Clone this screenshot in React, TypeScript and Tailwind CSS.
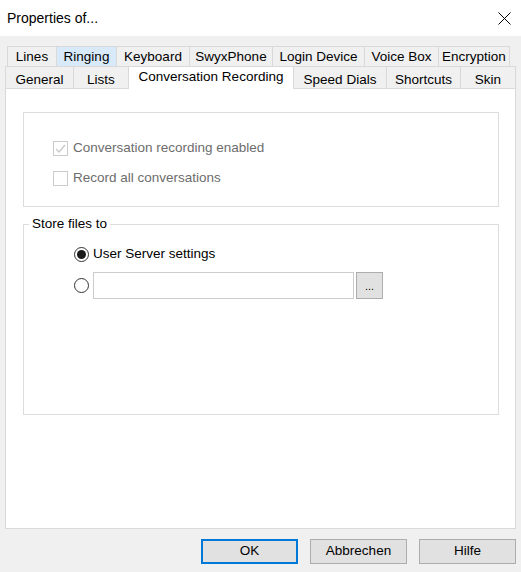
import { useState } from 'react'

const topTabs = [
  { label: 'Lines', w: 'w-[49px]', hover: false },
  { label: 'Ringing', w: 'w-[60px]', hover: true },
  { label: 'Keyboard', w: 'w-[73px]', hover: false },
  { label: 'SwyxPhone', w: 'w-[83px]', hover: false },
  { label: 'Login Device', w: 'w-[92px]', hover: false },
  { label: 'Voice Box', w: 'w-[74px]', hover: false },
  { label: 'Encryption', w: 'w-[72px]', hover: false },
]

const bottomTabs = [
  { label: 'General', w: 'w-[68px]' },
  { label: 'Lists', w: 'w-[55px]' },
  { label: 'Conversation Recording', w: 'w-[166px]' },
  { label: 'Speed Dials', w: 'w-[92px]' },
  { label: 'Shortcuts', w: 'w-[74px]' },
  { label: 'Skin', w: 'w-[56px]' },
]

function Radio({ checked }: { checked: boolean }) {
  return (
    <span className="w-[15px] h-[15px] rounded-full border border-[#333333] bg-white flex items-center justify-center shrink-0">
      {checked && <span className="w-[9px] h-[9px] rounded-full bg-[#1a1a1a]" />}
    </span>
  )
}

function CheckBox({ checked }: { checked: boolean }) {
  return (
    <span className="w-[15px] h-[15px] border border-[#cccccc] bg-white flex items-center justify-center shrink-0">
      {checked && (
        <svg width="13" height="13" viewBox="0 0 13 13">
          <path d="M2 7 L5 10 L11 3" fill="none" stroke="#c6c6c6" strokeWidth="1.2" />
        </svg>
      )}
    </span>
  )
}

export default function App() {
  const [active] = useState('Conversation Recording')
  const [path, setPath] = useState('')

  return (
    <div className="w-[521px] h-[572px] bg-[#f0f0f0] flex flex-col font-['Liberation_Sans',Arial,sans-serif] text-[13.5px] text-black overflow-hidden">
      {/* Title bar */}
      <div className="h-[36px] bg-white flex items-center justify-between pl-[7px] pr-[10px] shrink-0">
        <span className="text-[14px]">Properties of...</span>
        <svg width="13" height="13" viewBox="0 0 13 13">
          <path d="M0.5 0.5 L12.5 12.5 M12.5 0.5 L0.5 12.5" stroke="#000" strokeWidth="1" />
        </svg>
      </div>

      <div className="pl-[5px] pt-[10px]">
        {/* Tabs row 1 */}
        <div className="flex ml-[2px] h-[20px]">
          {topTabs.map((t, i) => (
            <div
              key={t.label}
              className={`${t.w} h-[20px] border-t border-l border-[#d9d9d9] text-center leading-[20px] ${
                t.hover ? 'bg-[#d8eaf9]' : 'bg-[#f0f0f0]'
              } ${i === topTabs.length - 1 ? 'border-r' : ''}`}
            >
              {t.label}
            </div>
          ))}
        </div>

        {/* Tabs row 2 */}
        <div className="flex h-[22px]">
          {bottomTabs.map((t, i) => {
            const isActive = t.label === active
            const afterActive = i > 0 && bottomTabs[i - 1].label === active
            if (isActive) {
              return (
                <div
                  key={t.label}
                  className={`${t.w} h-[23px] relative z-10 bg-white border-t border-l border-r border-[#d9d9d9] text-center leading-[19px]`}
                >
                  {t.label}
                </div>
              )
            }
            return (
              <div
                key={t.label}
                className={`${t.w} h-[22px] bg-[#f0f0f0] border-t border-[#d9d9d9] text-center leading-[25px] ${
                  afterActive ? '' : 'border-l'
                } ${i === bottomTabs.length - 1 ? 'border-r' : ''}`}
              >
                {t.label}
              </div>
            )
          })}
        </div>

        {/* Panel */}
        <div className="w-[511px] h-[441px] bg-white border border-[#d9d9d9] pl-[17px] pt-[23px]">
          <div className="w-[476px] h-[95px] border border-[#dcdcdc] pt-[28px] pl-[29px] text-[#6d6d6d]">
            <div className="flex items-center gap-[5px] h-[15px]">
              <CheckBox checked />
              <span>Conversation recording enabled</span>
            </div>
            <div className="flex items-center gap-[5px] h-[15px] mt-[15px]">
              <CheckBox checked={false} />
              <span>Record all conversations</span>
            </div>
          </div>

          <fieldset className="w-[476px] h-[199px] mt-[9px] border border-[#dcdcdc]">
            <legend className="ml-[5px] px-[3px] leading-[16px]">Store files to</legend>
            <div className="pl-[50px]">
              <div className="flex items-center gap-[4px] h-[16px] mt-[14px]">
                <Radio checked />
                <span>User Server settings</span>
              </div>
              <div className="flex items-center mt-[10px]">
                <Radio checked={false} />
                <input
                  value={path}
                  onChange={(e) => setPath(e.target.value)}
                  className="ml-[4px] w-[261px] h-[27px] border border-[#cccccc] px-1 outline-none"
                />
                <button className="ml-[2px] w-[27px] h-[27px] bg-[#e1e1e1] border border-[#adadad] text-[11px] leading-[20px]">
                  ...
                </button>
              </div>
            </div>
          </fieldset>
        </div>

        {/* Buttons */}
        <div className="flex justify-end gap-[12px] pr-[5px] mt-[10px]">
          <button className="w-[97px] h-[25px] bg-[#e1e1e1] border-2 border-[#0078d7]">OK</button>
          <button className="w-[97px] h-[25px] bg-[#e1e1e1] border border-[#adadad]">Abbrechen</button>
          <button className="w-[97px] h-[25px] bg-[#e1e1e1] border border-[#adadad]">Hilfe</button>
        </div>
      </div>
    </div>
  )
}
